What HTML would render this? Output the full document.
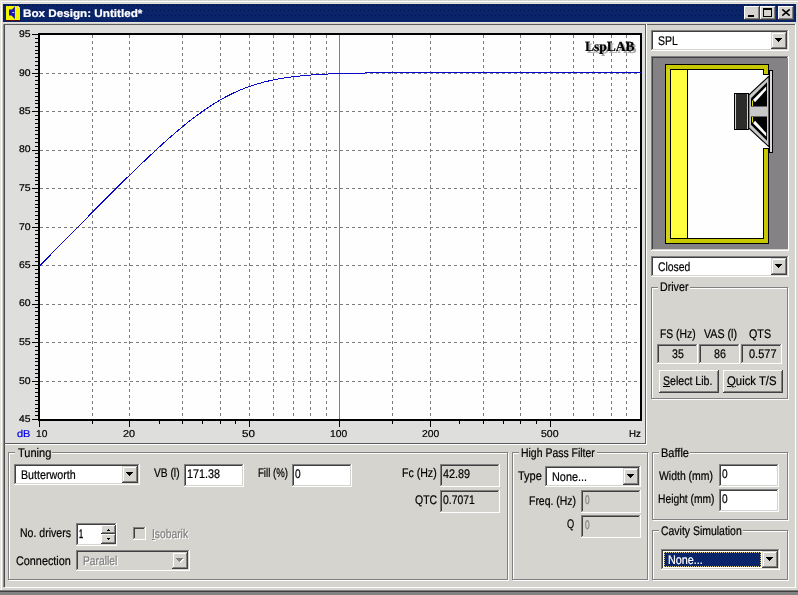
<!DOCTYPE html>
<html><head><meta charset="utf-8"><title>Box Design</title><style>html,body{margin:0;padding:0;background:#D5D4CF;}body{width:798px;height:595px;overflow:hidden;position:relative;font-family:"Liberation Sans",sans-serif;}div,span,svg{position:absolute;display:block;box-sizing:content-box;}span{line-height:normal;-webkit-text-stroke:0.22px currentColor;text-rendering:geometricPrecision;}u{text-decoration:underline;}</style></head><body>
<div style="left:0px;top:0px;width:798px;height:595px;background:#D5D4CF;"></div>
<div style="left:0px;top:0px;width:1px;height:590px;background:#E6E5E0;"></div>
<div style="left:1px;top:1px;width:798px;height:1px;background:#FFFFFF;"></div>
<div style="left:1px;top:1px;width:1px;height:589px;background:#FFFFFF;"></div>
<div style="left:0px;top:590px;width:798px;height:1px;background:#808080;"></div>
<div style="left:0px;top:591px;width:798px;height:1px;background:#404040;"></div>
<div style="left:0px;top:592px;width:798px;height:3px;background:#828282;"></div>
<div style="left:3px;top:4px;width:793px;height:18px;background:#0A246A;"></div>
<div style="left:3px;top:3px;width:793px;height:1px;background:#E6E4DC;"></div>
<div style="left:3px;top:22px;width:793px;height:1px;background:#E4E3DE;"></div>
<div style="left:4px;top:5px;width:792px;height:1px;background:repeating-linear-gradient(90deg,rgba(2,8,50,.75) 0,rgba(2,8,50,.75) 1px,transparent 1px,transparent 4px);background-position:0px 0"></div>
<div style="left:4px;top:10px;width:792px;height:1px;background:repeating-linear-gradient(90deg,rgba(2,8,50,.75) 0,rgba(2,8,50,.75) 1px,transparent 1px,transparent 4px);background-position:0px 0"></div>
<div style="left:4px;top:15px;width:792px;height:1px;background:repeating-linear-gradient(90deg,rgba(2,8,50,.75) 0,rgba(2,8,50,.75) 1px,transparent 1px,transparent 4px);background-position:3px 0"></div>
<div style="left:5px;top:6px;width:15px;height:15px;background:#5A0A0A;"></div>
<div style="left:6px;top:6px;width:14px;height:14px;background:#F4F400;"></div>
<svg style="left:5px;top:5px" width="17" height="17" viewBox="0 0 17 17"><rect x="4" y="4.5" width="3" height="6" fill="#1414B8"/><path d="M4.3 7.7 L9.9 1.2 L9.9 14.2 Z" fill="#1414B8"/><path d="M7.2 7.5h2" stroke="#d8d8a0" stroke-width="1"/><path d="M13 1 L15 1 L15 3 Z" fill="#0A246A"/><path d="M13 1 L13 3 L15 3 Z" fill="#f0f0e0"/></svg>
<div style="left:744px;top:6px;width:16px;height:14px;background:#404040;"></div>
<div style="left:744px;top:6px;width:15px;height:13px;background:#FFFFFF;"></div>
<div style="left:745px;top:7px;width:14px;height:12px;background:#808080;"></div>
<div style="left:745px;top:7px;width:13px;height:11px;background:#D5D4CF;"></div>
<div style="left:760px;top:6px;width:16px;height:14px;background:#404040;"></div>
<div style="left:760px;top:6px;width:15px;height:13px;background:#FFFFFF;"></div>
<div style="left:761px;top:7px;width:14px;height:12px;background:#808080;"></div>
<div style="left:761px;top:7px;width:13px;height:11px;background:#D5D4CF;"></div>
<div style="left:778px;top:6px;width:16px;height:14px;background:#404040;"></div>
<div style="left:778px;top:6px;width:15px;height:13px;background:#FFFFFF;"></div>
<div style="left:779px;top:7px;width:14px;height:12px;background:#808080;"></div>
<div style="left:779px;top:7px;width:13px;height:11px;background:#D5D4CF;"></div>
<div style="left:748px;top:15px;width:6px;height:2px;background:#000;"></div>
<div style="left:763px;top:8px;width:9px;height:9px;box-sizing:border-box;border:1px solid #000;border-top-width:2px"></div>
<svg style="left:781px;top:8px" width="10" height="9" viewBox="0 0 10 9"><path d="M1.9 1.9 L8.1 7.1 M8.1 1.9 L1.9 7.1" stroke="#000" stroke-width="1.6" stroke-linecap="square"/></svg>
<div style="left:3px;top:24px;width:1px;height:563px;background:#8e8e8c;"></div>
<div style="left:4px;top:24px;width:1px;height:563px;background:#4a4a50;"></div>
<div style="left:4px;top:24px;width:791px;height:1px;background:#5c5c5c;"></div>
<div style="left:5px;top:25px;width:640px;height:418px;background:#DEDFDD;"></div>
<div style="left:4px;top:443px;width:642px;height:1px;background:#5c5c5c;"></div>
<div style="left:645px;top:24px;width:1px;height:420px;background:#5c5c5c;"></div>
<div style="left:5px;top:444px;width:642px;height:1px;background:#FFFFFF;"></div>
<div style="left:646px;top:24px;width:1px;height:421px;background:#FFFFFF;"></div>
<div style="left:5px;top:587px;width:791px;height:1px;background:#FFFFFF;"></div>
<div style="left:795px;top:24px;width:1px;height:564px;background:#FFFFFF;"></div>
<svg style="left:0;top:0" width="660" height="445" viewBox="0 0 660 445"><rect x="38" y="33" width="604" height="388" fill="#000"/><rect x="40" y="35" width="600" height="384" fill="#FDFEFD"/><g shape-rendering="crispEdges" stroke="#7c7c7c" stroke-width="1" stroke-dasharray="3 3"><path d="M40 381.5H640"/><path d="M40 342.5H640"/><path d="M40 304.5H640"/><path d="M40 265.5H640"/><path d="M40 227.5H640"/><path d="M40 188.5H640"/><path d="M40 150.5H640"/><path d="M40 111.5H640"/><path d="M40 73.5H640"/><path d="M92.5 35V419"/><path d="M129.5 35V419"/><path d="M182.5 35V419"/><path d="M220.5 35V419"/><path d="M249.5 35V419"/><path d="M273.5 35V419"/><path d="M293.5 35V419"/><path d="M310.5 35V419"/><path d="M326.5 35V419"/><path d="M392.5 35V419"/><path d="M430.5 35V419"/><path d="M483.5 35V419"/><path d="M520.5 35V419"/><path d="M550.5 35V419"/><path d="M573.5 35V419"/><path d="M593.5 35V419"/><path d="M611.5 35V419"/><path d="M626.5 35V419"/></g><path d="M339.5 35V419" stroke="#808080" stroke-width="1" shape-rendering="crispEdges"/><g shape-rendering="crispEdges" stroke="#000" stroke-width="1"><path d="M32 34.5H38"/><path d="M35 38.5H38"/><path d="M35 42.5H38"/><path d="M35 46.5H38"/><path d="M35 50.5H38"/><path d="M35 53.5H38"/><path d="M35 57.5H38"/><path d="M35 61.5H38"/><path d="M35 65.5H38"/><path d="M35 69.5H38"/><path d="M32 73.5H38"/><path d="M35 76.5H38"/><path d="M35 80.5H38"/><path d="M35 84.5H38"/><path d="M35 88.5H38"/><path d="M35 92.5H38"/><path d="M35 96.5H38"/><path d="M35 100.5H38"/><path d="M35 103.5H38"/><path d="M35 107.5H38"/><path d="M32 111.5H38"/><path d="M35 115.5H38"/><path d="M35 119.5H38"/><path d="M35 123.5H38"/><path d="M35 127.5H38"/><path d="M35 130.5H38"/><path d="M35 134.5H38"/><path d="M35 138.5H38"/><path d="M35 142.5H38"/><path d="M35 146.5H38"/><path d="M32 150.5H38"/><path d="M35 153.5H38"/><path d="M35 157.5H38"/><path d="M35 161.5H38"/><path d="M35 165.5H38"/><path d="M35 169.5H38"/><path d="M35 173.5H38"/><path d="M35 177.5H38"/><path d="M35 180.5H38"/><path d="M35 184.5H38"/><path d="M32 188.5H38"/><path d="M35 192.5H38"/><path d="M35 196.5H38"/><path d="M35 200.5H38"/><path d="M35 204.5H38"/><path d="M35 207.5H38"/><path d="M35 211.5H38"/><path d="M35 215.5H38"/><path d="M35 219.5H38"/><path d="M35 223.5H38"/><path d="M32 227.5H38"/><path d="M35 230.5H38"/><path d="M35 234.5H38"/><path d="M35 238.5H38"/><path d="M35 242.5H38"/><path d="M35 246.5H38"/><path d="M35 250.5H38"/><path d="M35 254.5H38"/><path d="M35 257.5H38"/><path d="M35 261.5H38"/><path d="M32 265.5H38"/><path d="M35 269.5H38"/><path d="M35 273.5H38"/><path d="M35 277.5H38"/><path d="M35 281.5H38"/><path d="M35 284.5H38"/><path d="M35 288.5H38"/><path d="M35 292.5H38"/><path d="M35 296.5H38"/><path d="M35 300.5H38"/><path d="M32 304.5H38"/><path d="M35 307.5H38"/><path d="M35 311.5H38"/><path d="M35 315.5H38"/><path d="M35 319.5H38"/><path d="M35 323.5H38"/><path d="M35 327.5H38"/><path d="M35 331.5H38"/><path d="M35 334.5H38"/><path d="M35 338.5H38"/><path d="M32 342.5H38"/><path d="M35 346.5H38"/><path d="M35 350.5H38"/><path d="M35 354.5H38"/><path d="M35 358.5H38"/><path d="M35 361.5H38"/><path d="M35 365.5H38"/><path d="M35 369.5H38"/><path d="M35 373.5H38"/><path d="M35 377.5H38"/><path d="M32 381.5H38"/><path d="M35 384.5H38"/><path d="M35 388.5H38"/><path d="M35 392.5H38"/><path d="M35 396.5H38"/><path d="M35 400.5H38"/><path d="M35 404.5H38"/><path d="M35 408.5H38"/><path d="M35 411.5H38"/><path d="M35 415.5H38"/><path d="M32 419.5H38"/><path d="M39.5 421V427"/><path d="M92.5 421V424"/><path d="M129.5 421V427"/><path d="M159.5 421V424"/><path d="M182.5 421V424"/><path d="M202.5 421V424"/><path d="M220.5 421V424"/><path d="M235.5 421V424"/><path d="M249.5 421V427"/><path d="M339.5 421V427"/><path d="M392.5 421V424"/><path d="M430.5 421V427"/><path d="M459.5 421V424"/><path d="M483.5 421V424"/><path d="M503.5 421V424"/><path d="M520.5 421V424"/><path d="M536.5 421V424"/><path d="M550.5 421V427"/></g><polyline points="39.5,266.1 40.5,265.1 41.5,264.0 42.5,263.0 43.5,262.0 44.5,261.0 45.5,260.0 46.5,258.9 47.5,257.9 48.5,256.9 49.5,255.9 50.5,254.8 51.5,253.8 52.5,252.8 53.5,251.8 54.5,250.8 55.5,249.7 56.5,248.7 57.5,247.7 58.5,246.7 59.5,245.6 60.5,244.6 61.5,243.6 62.5,242.6 63.5,241.6 64.5,240.5 65.5,239.5 66.5,238.5 67.5,237.5 68.5,236.5 69.6,235.5 70.6,234.4 71.6,233.4 72.6,232.4 73.6,231.4 74.6,230.4 75.6,229.3 76.6,228.3 77.6,227.3 78.6,226.3 79.6,225.3 80.6,224.3 81.6,223.2 82.6,222.2 83.6,221.2 84.6,220.2 85.6,219.2 86.6,218.2 87.6,217.2 88.6,216.1 89.6,215.1 90.6,214.1 91.6,213.1 92.6,212.1 93.6,211.1 94.6,210.1 95.6,209.1 96.6,208.1 97.6,207.0 98.6,206.0 99.6,205.0 100.6,204.0 101.6,203.0 102.6,202.0 103.6,201.0 104.6,200.0 105.6,199.0 106.6,198.0 107.6,197.0 108.6,196.0 109.6,195.0 110.6,194.0 111.6,193.0 112.6,192.0 113.6,191.0 114.6,190.0 115.6,189.0 116.6,188.0 117.6,187.0 118.6,186.0 119.6,185.0 120.6,184.0 121.6,183.1 122.6,182.1 123.6,181.1 124.6,180.1 125.6,179.1 126.6,178.1 127.6,177.1 128.6,176.2 129.6,175.2 130.7,174.2 131.7,173.2 132.7,172.2 133.7,171.3 134.7,170.3 135.7,169.3 136.7,168.4 137.7,167.4 138.7,166.4 139.7,165.5 140.7,164.5 141.7,163.5 142.7,162.6 143.7,161.6 144.7,160.7 145.7,159.7 146.7,158.8 147.7,157.8 148.7,156.9 149.7,155.9 150.7,155.0 151.7,154.1 152.7,153.1 153.7,152.2 154.7,151.3 155.7,150.3 156.7,149.4 157.7,148.5 158.7,147.6 159.7,146.6 160.7,145.7 161.7,144.8 162.7,143.9 163.7,143.0 164.7,142.1 165.7,141.2 166.7,140.3 167.7,139.4 168.7,138.5 169.7,137.7 170.7,136.8 171.7,135.9 172.7,135.0 173.7,134.2 174.7,133.3 175.7,132.4 176.7,131.6 177.7,130.7 178.7,129.9 179.7,129.1 180.7,128.2 181.7,127.4 182.7,126.6 183.7,125.7 184.7,124.9 185.7,124.1 186.7,123.3 187.7,122.5 188.7,121.7 189.8,120.9 190.8,120.2 191.8,119.4 192.8,118.6 193.8,117.8 194.8,117.1 195.8,116.3 196.8,115.6 197.8,114.8 198.8,114.1 199.8,113.4 200.8,112.7 201.8,111.9 202.8,111.2 203.8,110.5 204.8,109.8 205.8,109.1 206.8,108.5 207.8,107.8 208.8,107.1 209.8,106.5 210.8,105.8 211.8,105.2 212.8,104.5 213.8,103.9 214.8,103.3 215.8,102.7 216.8,102.1 217.8,101.5 218.8,100.9 219.8,100.3 220.8,99.7 221.8,99.1 222.8,98.6 223.8,98.0 224.8,97.5 225.8,96.9 226.8,96.4 227.8,95.9 228.8,95.4 229.8,94.9 230.8,94.4 231.8,93.9 232.8,93.4 233.8,92.9 234.8,92.5 235.8,92.0 236.8,91.6 237.8,91.1 238.8,90.7 239.8,90.3 240.8,89.8 241.8,89.4 242.8,89.0 243.8,88.6 244.8,88.2 245.8,87.8 246.8,87.5 247.8,87.1 248.8,86.7 249.8,86.4 250.9,86.0 251.9,85.7 252.9,85.4 253.9,85.0 254.9,84.7 255.9,84.4 256.9,84.1 257.9,83.8 258.9,83.5 259.9,83.2 260.9,83.0 261.9,82.7 262.9,82.4 263.9,82.1 264.9,81.9 265.9,81.6 266.9,81.4 267.9,81.2 268.9,80.9 269.9,80.7 270.9,80.5 271.9,80.3 272.9,80.1 273.9,79.8 274.9,79.6 275.9,79.4 276.9,79.3 277.9,79.1 278.9,78.9 279.9,78.7 280.9,78.5 281.9,78.4 282.9,78.2 283.9,78.0 284.9,77.9 285.9,77.7 286.9,77.6 287.9,77.4 288.9,77.3 289.9,77.2 290.9,77.0 291.9,76.9 292.9,76.8 293.9,76.7 294.9,76.5 295.9,76.4 296.9,76.3 297.9,76.2 298.9,76.1 299.9,76.0 300.9,75.9 301.9,75.8 302.9,75.7 303.9,75.6 304.9,75.5 305.9,75.4 306.9,75.3 307.9,75.2 308.9,75.2 309.9,75.1 311.0,75.0 312.0,74.9 313.0,74.9 314.0,74.8 315.0,74.7 316.0,74.7 317.0,74.6 318.0,74.5 319.0,74.5 320.0,74.4 321.0,74.4 322.0,74.3 323.0,74.2 324.0,74.2 325.0,74.1 326.0,74.1 327.0,74.0 328.0,74.0 329.0,73.9 330.0,73.9 331.0,73.9 332.0,73.8 333.0,73.8 334.0,73.7 335.0,73.7 336.0,73.7 337.0,73.6 338.0,73.6 339.0,73.6 340.0,73.5 341.0,73.5 342.0,73.5 343.0,73.4 344.0,73.4 345.0,73.4 346.0,73.3 347.0,73.3 348.0,73.3 349.0,73.3 350.0,73.2 351.0,73.2 352.0,73.2 353.0,73.2 354.0,73.2 355.0,73.1 356.0,73.1 357.0,73.1 358.0,73.1 359.0,73.1 360.0,73.0 361.0,73.0 362.0,73.0 363.0,73.0 364.0,73.0 365.0,73.0 366.0,72.9 367.0,72.9 368.0,72.9 369.0,72.9 370.1,72.9 371.1,72.9 372.1,72.9 373.1,72.8 374.1,72.8 375.1,72.8 376.1,72.8 377.1,72.8 378.1,72.8 379.1,72.8 380.1,72.8 381.1,72.8 382.1,72.7 383.1,72.7 384.1,72.7 385.1,72.7 386.1,72.7 387.1,72.7 388.1,72.7 389.1,72.7 390.1,72.7 391.1,72.7 392.1,72.7 393.1,72.7 394.1,72.7 395.1,72.7 396.1,72.6 397.1,72.6 398.1,72.6 399.1,72.6 400.1,72.6 401.1,72.6 402.1,72.6 403.1,72.6 404.1,72.6 405.1,72.6 406.1,72.6 407.1,72.6 408.1,72.6 409.1,72.6 410.1,72.6 411.1,72.6 412.1,72.6 413.1,72.6 414.1,72.6 415.1,72.6 416.1,72.6 417.1,72.6 418.1,72.5 419.1,72.5 420.1,72.5 421.1,72.5 422.1,72.5 423.1,72.5 424.1,72.5 425.1,72.5 426.1,72.5 427.1,72.5 428.1,72.5 429.1,72.5 430.2,72.5 431.2,72.5 432.2,72.5 433.2,72.5 434.2,72.5 435.2,72.5 436.2,72.5 437.2,72.5 438.2,72.5 439.2,72.5 440.2,72.5 441.2,72.5 442.2,72.5 443.2,72.5 444.2,72.5 445.2,72.5 446.2,72.5 447.2,72.5 448.2,72.5 449.2,72.5 450.2,72.5 451.2,72.5 452.2,72.5 453.2,72.5 454.2,72.5 455.2,72.5 456.2,72.5 457.2,72.5 458.2,72.5 459.2,72.5 460.2,72.5 461.2,72.5 462.2,72.5 463.2,72.5 464.2,72.5 465.2,72.5 466.2,72.5 467.2,72.5 468.2,72.5 469.2,72.5 470.2,72.5 471.2,72.5 472.2,72.5 473.2,72.5 474.2,72.5 475.2,72.5 476.2,72.5 477.2,72.5 478.2,72.5 479.2,72.5 480.2,72.5 481.2,72.5 482.2,72.5 483.2,72.5 484.2,72.5 485.2,72.5 486.2,72.5 487.2,72.5 488.2,72.5 489.2,72.5 490.2,72.5 491.3,72.5 492.3,72.5 493.3,72.5 494.3,72.5 495.3,72.5 496.3,72.5 497.3,72.5 498.3,72.5 499.3,72.5 500.3,72.5 501.3,72.5 502.3,72.5 503.3,72.5 504.3,72.5 505.3,72.5 506.3,72.5 507.3,72.5 508.3,72.5 509.3,72.5 510.3,72.5 511.3,72.5 512.3,72.5 513.3,72.5 514.3,72.5 515.3,72.5 516.3,72.5 517.3,72.5 518.3,72.5 519.3,72.5 520.3,72.5 521.3,72.5 522.3,72.5 523.3,72.5 524.3,72.5 525.3,72.5 526.3,72.5 527.3,72.5 528.3,72.5 529.3,72.5 530.3,72.5 531.3,72.5 532.3,72.5 533.3,72.5 534.3,72.5 535.3,72.5 536.3,72.5 537.3,72.5 538.3,72.5 539.3,72.5 540.3,72.5 541.3,72.5 542.3,72.5 543.3,72.5 544.3,72.5 545.3,72.5 546.3,72.5 547.3,72.5 548.3,72.5 549.3,72.5 550.3,72.5 551.4,72.5 552.4,72.5 553.4,72.5 554.4,72.5 555.4,72.5 556.4,72.5 557.4,72.5 558.4,72.5 559.4,72.5 560.4,72.5 561.4,72.5 562.4,72.5 563.4,72.5 564.4,72.5 565.4,72.5 566.4,72.5 567.4,72.5 568.4,72.5 569.4,72.5 570.4,72.5 571.4,72.5 572.4,72.5 573.4,72.5 574.4,72.5 575.4,72.5 576.4,72.5 577.4,72.5 578.4,72.5 579.4,72.5 580.4,72.5 581.4,72.5 582.4,72.5 583.4,72.5 584.4,72.5 585.4,72.5 586.4,72.5 587.4,72.5 588.4,72.5 589.4,72.5 590.4,72.5 591.4,72.5 592.4,72.5 593.4,72.5 594.4,72.5 595.4,72.5 596.4,72.5 597.4,72.5 598.4,72.5 599.4,72.5 600.4,72.5 601.4,72.5 602.4,72.5 603.4,72.5 604.4,72.5 605.4,72.5 606.4,72.5 607.4,72.5 608.4,72.5 609.4,72.5 610.4,72.5 611.5,72.5 612.5,72.5 613.5,72.5 614.5,72.5 615.5,72.5 616.5,72.5 617.5,72.5 618.5,72.5 619.5,72.5 620.5,72.5 621.5,72.5 622.5,72.5 623.5,72.5 624.5,72.5 625.5,72.5 626.5,72.5 627.5,72.5 628.5,72.5 629.5,72.5 630.5,72.5 631.5,72.5 632.5,72.5 633.5,72.5 634.5,72.5 635.5,72.5 636.5,72.5 637.5,72.5 638.5,72.5 639.5,72.5 640.5,72.5" fill="none" stroke="#0808C8" stroke-width="1" shape-rendering="crispEdges"/></svg>
<div style="left:651px;top:30px;width:138px;height:21px;background:#FFFFFF;"></div>
<div style="left:651px;top:30px;width:137px;height:20px;background:#808080;"></div>
<div style="left:652px;top:31px;width:136px;height:19px;background:#D5D4CF;"></div>
<div style="left:652px;top:31px;width:135px;height:18px;background:#404040;"></div>
<div style="left:653px;top:32px;width:134px;height:17px;background:#FFFFFF;"></div>
<div style="left:771px;top:32px;width:16px;height:17px;background:#404040;"></div>
<div style="left:771px;top:32px;width:15px;height:16px;background:#D5D4CF;"></div>
<div style="left:772px;top:33px;width:14px;height:15px;background:#808080;"></div>
<div style="left:772px;top:33px;width:13px;height:14px;background:#FFFFFF;"></div>
<div style="left:773px;top:34px;width:12px;height:13px;background:#D5D4CF;"></div>
<div style="left:775px;top:38px;width:7px;height:1px;background:#000;"></div>
<div style="left:776px;top:39px;width:5px;height:1px;background:#000;"></div>
<div style="left:777px;top:40px;width:3px;height:1px;background:#000;"></div>
<div style="left:778px;top:41px;width:1px;height:1px;background:#000;"></div>
<div style="left:651px;top:56px;width:138px;height:195px;background:#FFFFFF;"></div>
<div style="left:651px;top:56px;width:137px;height:194px;background:#808080;"></div>
<div style="left:652px;top:57px;width:136px;height:193px;background:#D5D4CF;"></div>
<div style="left:652px;top:57px;width:135px;height:192px;background:#404040;"></div>
<div style="left:653px;top:58px;width:134px;height:191px;background:#848284;"></div>
<div style="left:653px;top:58px;width:135px;height:191px;background:#848284;"></div>
<svg style="left:652px;top:57px" width="136" height="193" viewBox="652 57 136 193" shape-rendering="crispEdges"><rect x="665" y="64" width="104" height="180" fill="#000"/><rect x="666" y="65" width="102" height="178" fill="#C8C800"/><rect x="666" y="69" width="4" height="174" fill="#D2D214"/><rect x="670" y="69" width="94" height="170" fill="#000"/><rect x="671" y="70" width="16" height="168" fill="#FFFF40"/><rect x="688" y="70" width="75" height="168" fill="#FDFEFD"/><rect x="763" y="75" width="7" height="73" fill="#FDFEFD"/><rect x="763" y="74" width="6" height="1" fill="#000"/><rect x="763" y="148" width="6" height="1" fill="#000"/><rect x="769" y="70" width="4" height="83" fill="#000"/><rect x="770" y="71" width="2" height="81" fill="#DCDCDC"/><g shape-rendering="auto"><path d="M769 76.2 L748.8 95 L748.8 128 L769 146.8 Z" fill="#C8C8C8" stroke="#000" stroke-width="1.1"/><path d="M767 82.3 L767 106.6 L751 106.6 L751 98.3 Z" fill="#000"/><path d="M767 140.7 L767 116.4 L751 116.4 L751 124.7 Z" fill="#000"/><path d="M766.2 86.4 L753 99.8 L755 102.3 L766.2 90 Z" fill="#fff"/><path d="M766.2 136.6 L753 123.2 L755 120.7 L766.2 133 Z" fill="#fff"/><path d="M752.5 100.6V106 M752.5 117V122.4" stroke="#E0E000" stroke-width="1"/></g><rect x="734" y="93" width="15" height="37" fill="#000"/><rect x="735" y="94" width="13" height="35" fill="#D0D0D0"/><rect x="736" y="94" width="11" height="35" fill="#2C2C2A"/></svg>
<div style="left:651px;top:256px;width:138px;height:21px;background:#FFFFFF;"></div>
<div style="left:651px;top:256px;width:137px;height:20px;background:#808080;"></div>
<div style="left:652px;top:257px;width:136px;height:19px;background:#D5D4CF;"></div>
<div style="left:652px;top:257px;width:135px;height:18px;background:#404040;"></div>
<div style="left:653px;top:258px;width:134px;height:17px;background:#FFFFFF;"></div>
<div style="left:771px;top:258px;width:16px;height:17px;background:#404040;"></div>
<div style="left:771px;top:258px;width:15px;height:16px;background:#D5D4CF;"></div>
<div style="left:772px;top:259px;width:14px;height:15px;background:#808080;"></div>
<div style="left:772px;top:259px;width:13px;height:14px;background:#FFFFFF;"></div>
<div style="left:773px;top:260px;width:12px;height:13px;background:#D5D4CF;"></div>
<div style="left:775px;top:264px;width:7px;height:1px;background:#000;"></div>
<div style="left:776px;top:265px;width:5px;height:1px;background:#000;"></div>
<div style="left:777px;top:266px;width:3px;height:1px;background:#000;"></div>
<div style="left:778px;top:267px;width:1px;height:1px;background:#000;"></div>
<div style="left:652px;top:288px;width:135px;height:110px;border:1px solid #FFFFFF;"></div>
<div style="left:651px;top:287px;width:135px;height:110px;border:1px solid #808080;"></div>
<div style="left:658px;top:281px;width:32px;height:12px;background:#D5D4CF;"></div>
<div style="left:657px;top:344px;width:41px;height:20px;background:#FFFFFF;"></div>
<div style="left:657px;top:344px;width:40px;height:19px;background:#808080;"></div>
<div style="left:658px;top:345px;width:39px;height:18px;background:#D5D4CF;"></div>
<div style="left:658px;top:345px;width:38px;height:17px;background:#404040;"></div>
<div style="left:659px;top:346px;width:37px;height:16px;background:#D5D4CF;"></div>
<div style="left:699px;top:344px;width:41px;height:20px;background:#FFFFFF;"></div>
<div style="left:699px;top:344px;width:40px;height:19px;background:#808080;"></div>
<div style="left:700px;top:345px;width:39px;height:18px;background:#D5D4CF;"></div>
<div style="left:700px;top:345px;width:38px;height:17px;background:#404040;"></div>
<div style="left:701px;top:346px;width:37px;height:16px;background:#D5D4CF;"></div>
<div style="left:741px;top:344px;width:41px;height:20px;background:#FFFFFF;"></div>
<div style="left:741px;top:344px;width:40px;height:19px;background:#808080;"></div>
<div style="left:742px;top:345px;width:39px;height:18px;background:#D5D4CF;"></div>
<div style="left:742px;top:345px;width:38px;height:17px;background:#404040;"></div>
<div style="left:743px;top:346px;width:37px;height:16px;background:#D5D4CF;"></div>
<div style="left:659px;top:370px;width:60px;height:23px;background:#404040;"></div>
<div style="left:659px;top:370px;width:59px;height:22px;background:#FFFFFF;"></div>
<div style="left:660px;top:371px;width:58px;height:21px;background:#808080;"></div>
<div style="left:660px;top:371px;width:57px;height:20px;background:#D5D4CF;"></div>
<div style="left:723px;top:370px;width:60px;height:23px;background:#404040;"></div>
<div style="left:723px;top:370px;width:59px;height:22px;background:#FFFFFF;"></div>
<div style="left:724px;top:371px;width:58px;height:21px;background:#808080;"></div>
<div style="left:724px;top:371px;width:57px;height:20px;background:#D5D4CF;"></div>
<div style="left:9px;top:453px;width:498px;height:126px;border:1px solid #FFFFFF;"></div>
<div style="left:8px;top:452px;width:498px;height:126px;border:1px solid #808080;"></div>
<div style="left:15px;top:447px;width:37px;height:12px;background:#D5D4CF;"></div>
<div style="left:14px;top:464px;width:126px;height:21px;background:#FFFFFF;"></div>
<div style="left:14px;top:464px;width:125px;height:20px;background:#808080;"></div>
<div style="left:15px;top:465px;width:124px;height:19px;background:#D5D4CF;"></div>
<div style="left:15px;top:465px;width:123px;height:18px;background:#404040;"></div>
<div style="left:16px;top:466px;width:122px;height:17px;background:#FFFFFF;"></div>
<div style="left:122px;top:466px;width:16px;height:17px;background:#404040;"></div>
<div style="left:122px;top:466px;width:15px;height:16px;background:#D5D4CF;"></div>
<div style="left:123px;top:467px;width:14px;height:15px;background:#808080;"></div>
<div style="left:123px;top:467px;width:13px;height:14px;background:#FFFFFF;"></div>
<div style="left:124px;top:468px;width:12px;height:13px;background:#D5D4CF;"></div>
<div style="left:126px;top:472px;width:7px;height:1px;background:#000;"></div>
<div style="left:127px;top:473px;width:5px;height:1px;background:#000;"></div>
<div style="left:128px;top:474px;width:3px;height:1px;background:#000;"></div>
<div style="left:129px;top:475px;width:1px;height:1px;background:#000;"></div>
<div style="left:184px;top:464px;width:60px;height:23px;background:#FFFFFF;"></div>
<div style="left:184px;top:464px;width:59px;height:22px;background:#808080;"></div>
<div style="left:185px;top:465px;width:58px;height:21px;background:#D5D4CF;"></div>
<div style="left:185px;top:465px;width:57px;height:20px;background:#404040;"></div>
<div style="left:186px;top:466px;width:56px;height:19px;background:#FFFFFF;"></div>
<div style="left:292px;top:464px;width:60px;height:23px;background:#FFFFFF;"></div>
<div style="left:292px;top:464px;width:59px;height:22px;background:#808080;"></div>
<div style="left:293px;top:465px;width:58px;height:21px;background:#D5D4CF;"></div>
<div style="left:293px;top:465px;width:57px;height:20px;background:#404040;"></div>
<div style="left:294px;top:466px;width:56px;height:19px;background:#FFFFFF;"></div>
<div style="left:440px;top:464px;width:60px;height:23px;background:#FFFFFF;"></div>
<div style="left:440px;top:464px;width:59px;height:22px;background:#808080;"></div>
<div style="left:441px;top:465px;width:58px;height:21px;background:#D5D4CF;"></div>
<div style="left:441px;top:465px;width:57px;height:20px;background:#404040;"></div>
<div style="left:442px;top:466px;width:56px;height:19px;background:#D5D4CF;"></div>
<div style="left:440px;top:490px;width:60px;height:23px;background:#FFFFFF;"></div>
<div style="left:440px;top:490px;width:59px;height:22px;background:#808080;"></div>
<div style="left:441px;top:491px;width:58px;height:21px;background:#D5D4CF;"></div>
<div style="left:441px;top:491px;width:57px;height:20px;background:#404040;"></div>
<div style="left:442px;top:492px;width:56px;height:19px;background:#D5D4CF;"></div>
<div style="left:76px;top:523px;width:41px;height:23px;background:#FFFFFF;"></div>
<div style="left:76px;top:523px;width:40px;height:22px;background:#808080;"></div>
<div style="left:77px;top:524px;width:39px;height:21px;background:#D5D4CF;"></div>
<div style="left:77px;top:524px;width:38px;height:20px;background:#404040;"></div>
<div style="left:78px;top:525px;width:37px;height:19px;background:#FFFFFF;"></div>
<div style="left:101px;top:525px;width:15px;height:9px;background:#404040;"></div>
<div style="left:101px;top:525px;width:14px;height:8px;background:#FFFFFF;"></div>
<div style="left:102px;top:526px;width:13px;height:7px;background:#808080;"></div>
<div style="left:102px;top:526px;width:12px;height:6px;background:#D5D4CF;"></div>
<div style="left:101px;top:534px;width:15px;height:10px;background:#404040;"></div>
<div style="left:101px;top:534px;width:14px;height:9px;background:#FFFFFF;"></div>
<div style="left:102px;top:535px;width:13px;height:8px;background:#808080;"></div>
<div style="left:102px;top:535px;width:12px;height:7px;background:#D5D4CF;"></div>
<div style="left:108px;top:529px;width:1px;height:1px;background:#000;"></div>
<div style="left:107px;top:530px;width:3px;height:1px;background:#000;"></div>
<div style="left:107px;top:538px;width:3px;height:1px;background:#000;"></div>
<div style="left:108px;top:539px;width:1px;height:1px;background:#000;"></div>
<div style="left:133px;top:527px;width:13px;height:13px;background:#FFFFFF;"></div>
<div style="left:133px;top:527px;width:12px;height:12px;background:#808080;"></div>
<div style="left:134px;top:528px;width:11px;height:11px;background:#D5D4CF;"></div>
<div style="left:134px;top:528px;width:10px;height:10px;background:#404040;"></div>
<div style="left:135px;top:529px;width:9px;height:9px;background:#D5D4CF;"></div>
<div style="left:76px;top:550px;width:114px;height:21px;background:#FFFFFF;"></div>
<div style="left:76px;top:550px;width:113px;height:20px;background:#808080;"></div>
<div style="left:77px;top:551px;width:112px;height:19px;background:#D5D4CF;"></div>
<div style="left:77px;top:551px;width:111px;height:18px;background:#404040;"></div>
<div style="left:78px;top:552px;width:110px;height:17px;background:#D5D4CF;"></div>
<div style="left:172px;top:552px;width:16px;height:17px;background:#404040;"></div>
<div style="left:172px;top:552px;width:15px;height:16px;background:#D5D4CF;"></div>
<div style="left:173px;top:553px;width:14px;height:15px;background:#808080;"></div>
<div style="left:173px;top:553px;width:13px;height:14px;background:#FFFFFF;"></div>
<div style="left:174px;top:554px;width:12px;height:13px;background:#D5D4CF;"></div>
<div style="left:177px;top:559px;width:7px;height:1px;background:#FFFFFF;"></div>
<div style="left:178px;top:560px;width:5px;height:1px;background:#FFFFFF;"></div>
<div style="left:179px;top:561px;width:3px;height:1px;background:#FFFFFF;"></div>
<div style="left:180px;top:562px;width:1px;height:1px;background:#FFFFFF;"></div>
<div style="left:176px;top:558px;width:7px;height:1px;background:#808080;"></div>
<div style="left:177px;top:559px;width:5px;height:1px;background:#808080;"></div>
<div style="left:178px;top:560px;width:3px;height:1px;background:#808080;"></div>
<div style="left:179px;top:561px;width:1px;height:1px;background:#808080;"></div>
<div style="left:513px;top:453px;width:134px;height:126px;border:1px solid #FFFFFF;"></div>
<div style="left:512px;top:452px;width:134px;height:126px;border:1px solid #808080;"></div>
<div style="left:519px;top:447px;width:78px;height:12px;background:#D5D4CF;"></div>
<div style="left:545px;top:466px;width:96px;height:21px;background:#FFFFFF;"></div>
<div style="left:545px;top:466px;width:95px;height:20px;background:#808080;"></div>
<div style="left:546px;top:467px;width:94px;height:19px;background:#D5D4CF;"></div>
<div style="left:546px;top:467px;width:93px;height:18px;background:#404040;"></div>
<div style="left:547px;top:468px;width:92px;height:17px;background:#FFFFFF;"></div>
<div style="left:623px;top:468px;width:16px;height:17px;background:#404040;"></div>
<div style="left:623px;top:468px;width:15px;height:16px;background:#D5D4CF;"></div>
<div style="left:624px;top:469px;width:14px;height:15px;background:#808080;"></div>
<div style="left:624px;top:469px;width:13px;height:14px;background:#FFFFFF;"></div>
<div style="left:625px;top:470px;width:12px;height:13px;background:#D5D4CF;"></div>
<div style="left:627px;top:474px;width:7px;height:1px;background:#000;"></div>
<div style="left:628px;top:475px;width:5px;height:1px;background:#000;"></div>
<div style="left:629px;top:476px;width:3px;height:1px;background:#000;"></div>
<div style="left:630px;top:477px;width:1px;height:1px;background:#000;"></div>
<div style="left:581px;top:490px;width:60px;height:23px;background:#FFFFFF;"></div>
<div style="left:581px;top:490px;width:59px;height:22px;background:#808080;"></div>
<div style="left:582px;top:491px;width:58px;height:21px;background:#D5D4CF;"></div>
<div style="left:582px;top:491px;width:57px;height:20px;background:#404040;"></div>
<div style="left:583px;top:492px;width:56px;height:19px;background:#D5D4CF;"></div>
<div style="left:581px;top:515px;width:60px;height:23px;background:#FFFFFF;"></div>
<div style="left:581px;top:515px;width:59px;height:22px;background:#808080;"></div>
<div style="left:582px;top:516px;width:58px;height:21px;background:#D5D4CF;"></div>
<div style="left:582px;top:516px;width:57px;height:20px;background:#404040;"></div>
<div style="left:583px;top:517px;width:56px;height:19px;background:#D5D4CF;"></div>
<div style="left:653px;top:453px;width:134px;height:66px;border:1px solid #FFFFFF;"></div>
<div style="left:652px;top:452px;width:134px;height:66px;border:1px solid #808080;"></div>
<div style="left:659px;top:447px;width:31px;height:12px;background:#D5D4CF;"></div>
<div style="left:719px;top:464px;width:60px;height:23px;background:#FFFFFF;"></div>
<div style="left:719px;top:464px;width:59px;height:22px;background:#808080;"></div>
<div style="left:720px;top:465px;width:58px;height:21px;background:#D5D4CF;"></div>
<div style="left:720px;top:465px;width:57px;height:20px;background:#404040;"></div>
<div style="left:721px;top:466px;width:56px;height:19px;background:#FFFFFF;"></div>
<div style="left:719px;top:489px;width:60px;height:23px;background:#FFFFFF;"></div>
<div style="left:719px;top:489px;width:59px;height:22px;background:#808080;"></div>
<div style="left:720px;top:490px;width:58px;height:21px;background:#D5D4CF;"></div>
<div style="left:720px;top:490px;width:57px;height:20px;background:#404040;"></div>
<div style="left:721px;top:491px;width:56px;height:19px;background:#FFFFFF;"></div>
<div style="left:653px;top:531px;width:134px;height:48px;border:1px solid #FFFFFF;"></div>
<div style="left:652px;top:530px;width:134px;height:48px;border:1px solid #808080;"></div>
<div style="left:659px;top:525px;width:84px;height:12px;background:#D5D4CF;"></div>
<div style="left:661px;top:549px;width:119px;height:21px;background:#FFFFFF;"></div>
<div style="left:661px;top:549px;width:118px;height:20px;background:#808080;"></div>
<div style="left:662px;top:550px;width:117px;height:19px;background:#D5D4CF;"></div>
<div style="left:662px;top:550px;width:116px;height:18px;background:#404040;"></div>
<div style="left:663px;top:551px;width:115px;height:17px;background:#FFFFFF;"></div>
<div style="left:762px;top:551px;width:16px;height:17px;background:#404040;"></div>
<div style="left:762px;top:551px;width:15px;height:16px;background:#D5D4CF;"></div>
<div style="left:763px;top:552px;width:14px;height:15px;background:#808080;"></div>
<div style="left:763px;top:552px;width:13px;height:14px;background:#FFFFFF;"></div>
<div style="left:764px;top:553px;width:12px;height:13px;background:#D5D4CF;"></div>
<div style="left:766px;top:557px;width:7px;height:1px;background:#000;"></div>
<div style="left:767px;top:558px;width:5px;height:1px;background:#000;"></div>
<div style="left:768px;top:559px;width:3px;height:1px;background:#000;"></div>
<div style="left:769px;top:560px;width:1px;height:1px;background:#000;"></div>
<div style="left:664px;top:552px;width:97px;height:15px;background:#0A246A;"></div>
<div style="left:664px;top:552px;width:95px;height:13px;border:1px dotted #E0CC80;"></div>
<div style="left:0;top:0;width:798px;height:595px;will-change:transform">
<span style="left:22.61px;top:8.00px;font:bold 11px 'Liberation Sans';color:#fff;transform:scaleX(1.0614);transform-origin:0 0;white-space:nowrap;">Box Design: Untitled*</span>
<span style="left:18.98px;top:414.19px;font:9.7px 'Liberation Sans';color:#000;transform:scaleX(1.0663);transform-origin:0 0;white-space:nowrap;">45</span>
<span style="left:18.80px;top:376.19px;font:9.7px 'Liberation Sans';color:#000;transform:scaleX(1.0778);transform-origin:0 0;white-space:nowrap;">50</span>
<span style="left:18.80px;top:337.19px;font:9.7px 'Liberation Sans';color:#000;transform:scaleX(1.0836);transform-origin:0 0;white-space:nowrap;">55</span>
<span style="left:18.80px;top:298.19px;font:9.7px 'Liberation Sans';color:#000;transform:scaleX(1.0772);transform-origin:0 0;white-space:nowrap;">60</span>
<span style="left:18.80px;top:260.19px;font:9.7px 'Liberation Sans';color:#000;transform:scaleX(1.0831);transform-origin:0 0;white-space:nowrap;">65</span>
<span style="left:18.77px;top:222.19px;font:9.7px 'Liberation Sans';color:#000;transform:scaleX(1.0804);transform-origin:0 0;white-space:nowrap;">70</span>
<span style="left:18.77px;top:183.19px;font:9.7px 'Liberation Sans';color:#000;transform:scaleX(1.0863);transform-origin:0 0;white-space:nowrap;">75</span>
<span style="left:18.86px;top:144.19px;font:9.7px 'Liberation Sans';color:#000;transform:scaleX(1.0720);transform-origin:0 0;white-space:nowrap;">80</span>
<span style="left:18.86px;top:106.19px;font:9.7px 'Liberation Sans';color:#000;transform:scaleX(1.0778);transform-origin:0 0;white-space:nowrap;">85</span>
<span style="left:18.87px;top:68.19px;font:9.7px 'Liberation Sans';color:#000;transform:scaleX(1.0709);transform-origin:0 0;white-space:nowrap;">90</span>
<span style="left:18.87px;top:29.19px;font:9.7px 'Liberation Sans';color:#000;transform:scaleX(1.0767);transform-origin:0 0;white-space:nowrap;">95</span>
<span style="left:17.21px;top:429.13px;font:10px 'Liberation Sans';color:#0000E6;transform:scaleX(1.1010);transform-origin:0 0;white-space:nowrap;">dB</span>
<span style="left:36.06px;top:429.13px;font:10px 'Liberation Sans';color:#000;transform:scaleX(1.0218);transform-origin:0 0;white-space:nowrap;">10</span>
<span style="left:122.79px;top:429.13px;font:10px 'Liberation Sans';color:#000;transform:scaleX(1.0837);transform-origin:0 0;white-space:nowrap;">20</span>
<span style="left:242.03px;top:429.13px;font:10px 'Liberation Sans';color:#000;transform:scaleX(1.1627);transform-origin:0 0;white-space:nowrap;">50</span>
<span style="left:330.26px;top:429.13px;font:10px 'Liberation Sans';color:#000;transform:scaleX(1.0299);transform-origin:0 0;white-space:nowrap;">100</span>
<span style="left:421.71px;top:429.13px;font:10px 'Liberation Sans';color:#000;transform:scaleX(1.0329);transform-origin:0 0;white-space:nowrap;">200</span>
<span style="left:540.98px;top:429.13px;font:10px 'Liberation Sans';color:#000;transform:scaleX(1.0527);transform-origin:0 0;white-space:nowrap;">500</span>
<span style="left:628.67px;top:429.13px;font:10px 'Liberation Sans';color:#000;transform:scaleX(0.9685);transform-origin:0 0;white-space:nowrap;">Hz</span>
<span style="left:586.84px;top:41.50px;font:bold 14px 'Liberation Serif';color:#a8a8a8;transform:scaleX(0.9634);transform-origin:0 0;white-space:nowrap;">LspLAB</span>
<span style="left:584.84px;top:39.50px;font:bold 14px 'Liberation Serif';color:#000;transform:scaleX(0.9634);transform-origin:0 0;white-space:nowrap;">LspLAB</span>
<span style="left:658.20px;top:34.03px;font:12.5px 'Liberation Sans';color:#000;transform:scaleX(0.8393);transform-origin:0 0;white-space:nowrap;">SPL</span>
<span style="left:658.09px;top:260.03px;font:12.5px 'Liberation Sans';color:#000;transform:scaleX(0.8305);transform-origin:0 0;white-space:nowrap;">Closed</span>
<span style="left:659.70px;top:279.53px;font:12.5px 'Liberation Sans';color:#000;transform:scaleX(0.8531);transform-origin:0 0;white-space:nowrap;">Driver</span>
<span style="left:660.12px;top:326.53px;font:12.5px 'Liberation Sans';color:#000;transform:scaleX(0.8270);transform-origin:0 0;white-space:nowrap;">FS (Hz)</span>
<span style="left:703.93px;top:326.53px;font:12.5px 'Liberation Sans';color:#000;transform:scaleX(0.8526);transform-origin:0 0;white-space:nowrap;">VAS (l)</span>
<span style="left:748.92px;top:326.53px;font:12.5px 'Liberation Sans';color:#000;transform:scaleX(0.8576);transform-origin:0 0;white-space:nowrap;">QTS</span>
<span style="left:671.53px;top:346.53px;font:12.5px 'Liberation Sans';color:#000;transform:scaleX(0.8463);transform-origin:0 0;white-space:nowrap;">35</span>
<span style="left:713.62px;top:346.53px;font:12.5px 'Liberation Sans';color:#000;transform:scaleX(0.8549);transform-origin:0 0;white-space:nowrap;">86</span>
<span style="left:748.53px;top:346.53px;font:12.5px 'Liberation Sans';color:#000;transform:scaleX(0.8793);transform-origin:0 0;white-space:nowrap;">0.577</span>
<span style="left:662.60px;top:374.03px;font:12.5px 'Liberation Sans';color:#000;transform:scaleX(0.8468);transform-origin:0 0;white-space:nowrap;"><u>S</u>elect Lib.</span>
<span style="left:727.00px;top:374.03px;font:12.5px 'Liberation Sans';color:#000;transform:scaleX(0.9065);transform-origin:0 0;white-space:nowrap;"><u>Q</u>uick T/S</span>
<span style="left:17.56px;top:446.03px;font:12.5px 'Liberation Sans';color:#000;transform:scaleX(0.8829);transform-origin:0 0;white-space:nowrap;">Tuning</span>
<span style="left:21.30px;top:468.03px;font:12.5px 'Liberation Sans';color:#000;transform:scaleX(0.8543);transform-origin:0 0;white-space:nowrap;">Butterworth</span>
<span style="left:154.24px;top:466.03px;font:12.5px 'Liberation Sans';color:#000;transform:scaleX(0.8174);transform-origin:0 0;white-space:nowrap;">VB (l)</span>
<span style="left:187.36px;top:467.03px;font:12.5px 'Liberation Sans';color:#000;transform:scaleX(0.8663);transform-origin:0 0;white-space:nowrap;">171.38</span>
<span style="left:257.77px;top:466.03px;font:12.5px 'Liberation Sans';color:#000;transform:scaleX(0.7688);transform-origin:0 0;white-space:nowrap;">Fill (%)</span>
<span style="left:295.35px;top:467.03px;font:12.5px 'Liberation Sans';color:#000;transform:scaleX(0.8103);transform-origin:0 0;white-space:nowrap;">0</span>
<span style="left:401.90px;top:466.03px;font:12.5px 'Liberation Sans';color:#000;transform:scaleX(0.8461);transform-origin:0 0;white-space:nowrap;">Fc (Hz)</span>
<span style="left:443.41px;top:467.03px;font:12.5px 'Liberation Sans';color:#000;transform:scaleX(0.8666);transform-origin:0 0;white-space:nowrap;">42.89</span>
<span style="left:414.63px;top:493.03px;font:12.5px 'Liberation Sans';color:#000;transform:scaleX(0.8357);transform-origin:0 0;white-space:nowrap;">QTC</span>
<span style="left:443.24px;top:493.03px;font:12.5px 'Liberation Sans';color:#000;transform:scaleX(0.8312);transform-origin:0 0;white-space:nowrap;">0.7071</span>
<span style="left:19.91px;top:526.03px;font:12.5px 'Liberation Sans';color:#000;transform:scaleX(0.8428);transform-origin:0 0;white-space:nowrap;">No. drivers</span>
<span style="left:79.37px;top:526.53px;font:12.5px 'Liberation Sans';color:#000;transform:scaleX(0.5849);transform-origin:0 0;white-space:nowrap;-webkit-text-stroke:0.45px #000;">1</span>
<span style="left:152.50px;top:527.53px;font:12.5px 'Liberation Sans';color:#fff;transform:scaleX(0.8235);transform-origin:0 0;white-space:nowrap;"><u>I</u>sobarik</span>
<span style="left:151.50px;top:526.53px;font:12.5px 'Liberation Sans';color:#808080;transform:scaleX(0.8235);transform-origin:0 0;white-space:nowrap;"><u>I</u>sobarik</span>
<span style="left:15.87px;top:553.53px;font:12.5px 'Liberation Sans';color:#000;transform:scaleX(0.8666);transform-origin:0 0;white-space:nowrap;">Connection</span>
<span style="left:84.13px;top:555.03px;font:12.5px 'Liberation Sans';color:#fff;transform:scaleX(0.8215);transform-origin:0 0;white-space:nowrap;">Parallel</span>
<span style="left:83.13px;top:554.03px;font:12.5px 'Liberation Sans';color:#808080;transform:scaleX(0.8215);transform-origin:0 0;white-space:nowrap;">Parallel</span>
<span style="left:520.81px;top:446.03px;font:12.5px 'Liberation Sans';color:#000;transform:scaleX(0.8363);transform-origin:0 0;white-space:nowrap;">High Pass Filter</span>
<span style="left:517.66px;top:469.03px;font:12.5px 'Liberation Sans';color:#000;transform:scaleX(0.8798);transform-origin:0 0;white-space:nowrap;">Type</span>
<span style="left:552.29px;top:470.03px;font:12.5px 'Liberation Sans';color:#000;transform:scaleX(0.8689);transform-origin:0 0;white-space:nowrap;">None...</span>
<span style="left:529.01px;top:494.03px;font:12.5px 'Liberation Sans';color:#000;transform:scaleX(0.8352);transform-origin:0 0;white-space:nowrap;">Freq. (Hz)</span>
<span style="left:585.09px;top:493.03px;font:12.5px 'Liberation Sans';color:#808080;transform:scaleX(0.6701);transform-origin:0 0;white-space:nowrap;">0</span>
<span style="left:566.58px;top:517.23px;font:12.5px 'Liberation Sans';color:#000;transform:scaleX(0.7355);transform-origin:0 0;white-space:nowrap;">Q</span>
<span style="left:585.09px;top:518.03px;font:12.5px 'Liberation Sans';color:#808080;transform:scaleX(0.6701);transform-origin:0 0;white-space:nowrap;">0</span>
<span style="left:660.68px;top:446.03px;font:12.5px 'Liberation Sans';color:#000;transform:scaleX(0.8813);transform-origin:0 0;white-space:nowrap;">Baffle</span>
<span style="left:658.83px;top:468.53px;font:12.5px 'Liberation Sans';color:#000;transform:scaleX(0.8360);transform-origin:0 0;white-space:nowrap;">Width (mm)</span>
<span style="left:722.35px;top:467.03px;font:12.5px 'Liberation Sans';color:#000;transform:scaleX(0.8103);transform-origin:0 0;white-space:nowrap;">0</span>
<span style="left:658.22px;top:491.73px;font:12.5px 'Liberation Sans';color:#000;transform:scaleX(0.8222);transform-origin:0 0;white-space:nowrap;">Height (mm)</span>
<span style="left:722.35px;top:492.03px;font:12.5px 'Liberation Sans';color:#000;transform:scaleX(0.8103);transform-origin:0 0;white-space:nowrap;">0</span>
<span style="left:660.99px;top:524.03px;font:12.5px 'Liberation Sans';color:#000;transform:scaleX(0.8361);transform-origin:0 0;white-space:nowrap;">Cavity Simulation</span>
<span style="left:668.19px;top:553.03px;font:12.5px 'Liberation Sans';color:#fff;transform:scaleX(0.8637);transform-origin:0 0;white-space:nowrap;">None...</span>
</div>
</body></html>
